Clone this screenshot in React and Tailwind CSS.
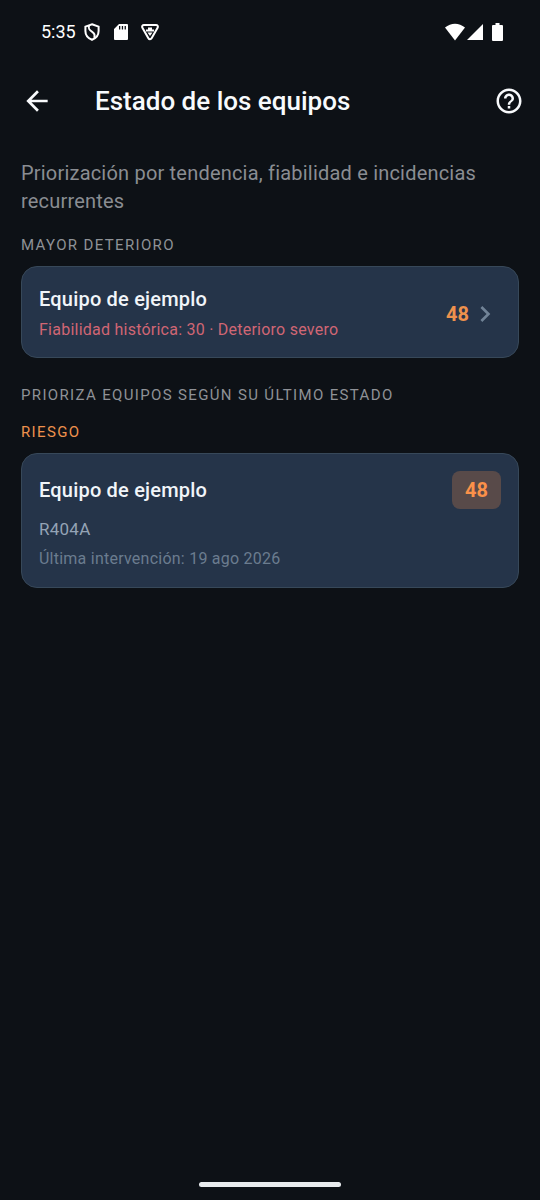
import { MdArrowBack, MdChevronRight, MdHelpOutline } from "react-icons/md";

const WORST = [
  { id: "eq-1", name: "Equipo de ejemplo", detail: "Fiabilidad histórica: 30 · Deterioro severo", score: 48 },
];

const RISK = [
  { id: "eq-1", name: "Equipo de ejemplo", gas: "R404A", last: "Última intervención: 19 ago 2026", score: 48 },
];

function StatusBar() {
  return (
    <div className="flex h-16 items-center justify-between pr-[37px] pl-[41px] text-white">
      <div className="flex items-center">
        <span className="text-lg">5:35</span>
        <svg className="ml-2 h-[18px] w-4" viewBox="0 0 16 18" fill="none" stroke="currentColor" strokeWidth="2">
          <path d="M8 1.200 14.600 3.600V8c0 4-2.600 7.200-6.600 8.800C4 15.200 1.400 12 1.400 8V3.600Z" />
          <path d="M5 2.600C4 6 5.500 7.200 8.200 8.800c2.600 1.600 3 3.200 2 6" />
        </svg>
        <svg className="ml-3.5 h-[18px] w-[14px]" viewBox="0 0 14 18" fill="currentColor">
          <path
            fillRule="evenodd"
            d="M5 1h8Q14 1 14 2v14q0 1-1 1h-12Q0 17 0 16V6ZM5 3v3.500h1.300v-3.500Zm2.800 0v3.500h1.300v-3.500Zm2.800 0v3.500h1.300v-3.500Z"
          />
        </svg>
        <svg className="ml-[13px] h-[18px] w-[18px]" viewBox="0 0 18 18" fill="none" stroke="currentColor" strokeWidth="2">
          <path d="M3 2h12c1.500 0 2.300 1.400 1.600 2.700l-6 10.600c-.7 1.300-2.500 1.300-3.200 0l-6-10.600C.7 3.400 1.500 2 3 2Z" />
          <path d="M7 4.500h4v2h2v2H5v-2h2ZM6.500 9.500h5L9 13Z" fill="currentColor" stroke="none" />
        </svg>
      </div>
      <div className="flex items-center">
        <svg className="h-[18px] w-5" viewBox="0 0 20 18" fill="currentColor">
          <path d="M10 17.500 0 4.600C6-.5 14-.5 20 4.600Z" />
        </svg>
        <svg className="ml-0.5 h-[18px] w-4" viewBox="0 0 16 18" fill="currentColor">
          <path d="M16 1v16H0Z" />
        </svg>
        <svg className="ml-[9px] h-[18px] w-[11px]" viewBox="0 0 11 18" fill="currentColor">
          <path d="M3.500 0h4v2H10q1 0 1 1v14q0 1-1 1H1q-1 0-1-1V3q0-1 1-1h2.500Z" />
        </svg>
      </div>
    </div>
  );
}

function SectionLabel({ className, children }) {
  return <h2 className={`text-[15px] leading-5 tracking-[0.09em] uppercase ${className}`}>{children}</h2>;
}

function WorstCard({ item }) {
  return (
    <button
      type="button"
      className="flex w-full items-center justify-between rounded-2xl border border-[#374859] bg-[#253449] px-[17px] pt-[18px] pb-[15px] text-left"
    >
      <span className="min-w-0">
        <span className="block text-xl leading-7 font-medium tracking-[0.01em] text-[#f1f5f9]">{item.name}</span>
        <span className="mt-[5px] block text-base leading-6 tracking-[0.015em] text-[#d06674]">{item.detail}</span>
      </span>
      <span className="flex items-center">
        <span className="text-xl font-bold text-[#ee914d]">{item.score}</span>
        <MdChevronRight className="h-8 w-8 text-[#718397]" />
      </span>
    </button>
  );
}

function RiskCard({ item }) {
  return (
    <button
      type="button"
      className="block w-full rounded-2xl border border-[#374859] bg-[#253449] px-[17px] pt-[17px] pb-4 text-left"
    >
      <span className="flex items-center justify-between">
        <span className="text-xl leading-7 font-medium tracking-[0.01em] text-[#f1f5f9]">{item.name}</span>
        <span className="rounded-lg bg-[#584a49] px-[13px] py-[5px] text-xl leading-7 font-bold text-[#fb9149]">
          {item.score}
        </span>
      </span>
      <span className="mt-2 block text-[17px] leading-6 tracking-[0.015em] text-[#94a3b5]">{item.gas}</span>
      <span className="mt-1.5 block text-base leading-6 tracking-[0.015em] text-[#6b7c8f]">{item.last}</span>
    </button>
  );
}

export default function App() {
  return (
    <div className="flex min-h-screen flex-col bg-[#0d1116] font-[Roboto,sans-serif]">
      <StatusBar />
      <header className="flex h-[74px] items-center pr-4 pl-[21px] text-[#f8fafc]">
        <button type="button" aria-label="Volver">
          <MdArrowBack className="h-8 w-8" />
        </button>
        <h1 className="ml-[42px] flex-1 text-[26px] leading-8 font-medium">Estado de los equipos</h1>
        <button type="button" aria-label="Ayuda">
          <MdHelpOutline className="h-[30px] w-[30px]" />
        </button>
      </header>
      <main className="flex-1 px-[21px] pt-[21px]">
        <p className="text-xl leading-7 tracking-[0.01em] text-[#8a8d92]">
          Priorización por tendencia, fiabilidad e incidencias recurrentes
        </p>
        <SectionLabel className="mt-5 mb-[11px] text-[#8f9297]">Mayor deterioro</SectionLabel>
        {WORST.map((item) => (
          <WorstCard key={item.id} item={item} />
        ))}
        <SectionLabel className="mt-[27px] text-[#8f9297]">Prioriza equipos según su último estado</SectionLabel>
        <SectionLabel className="mt-[17px] mb-[11px] text-[#ee914d]">Riesgo</SectionLabel>
        {RISK.map((item) => (
          <RiskCard key={item.id} item={item} />
        ))}
      </main>
      <div className="mx-auto mb-[13px] h-[5px] w-[142px] rounded-full bg-[#e8ebee]" />
    </div>
  );
}
